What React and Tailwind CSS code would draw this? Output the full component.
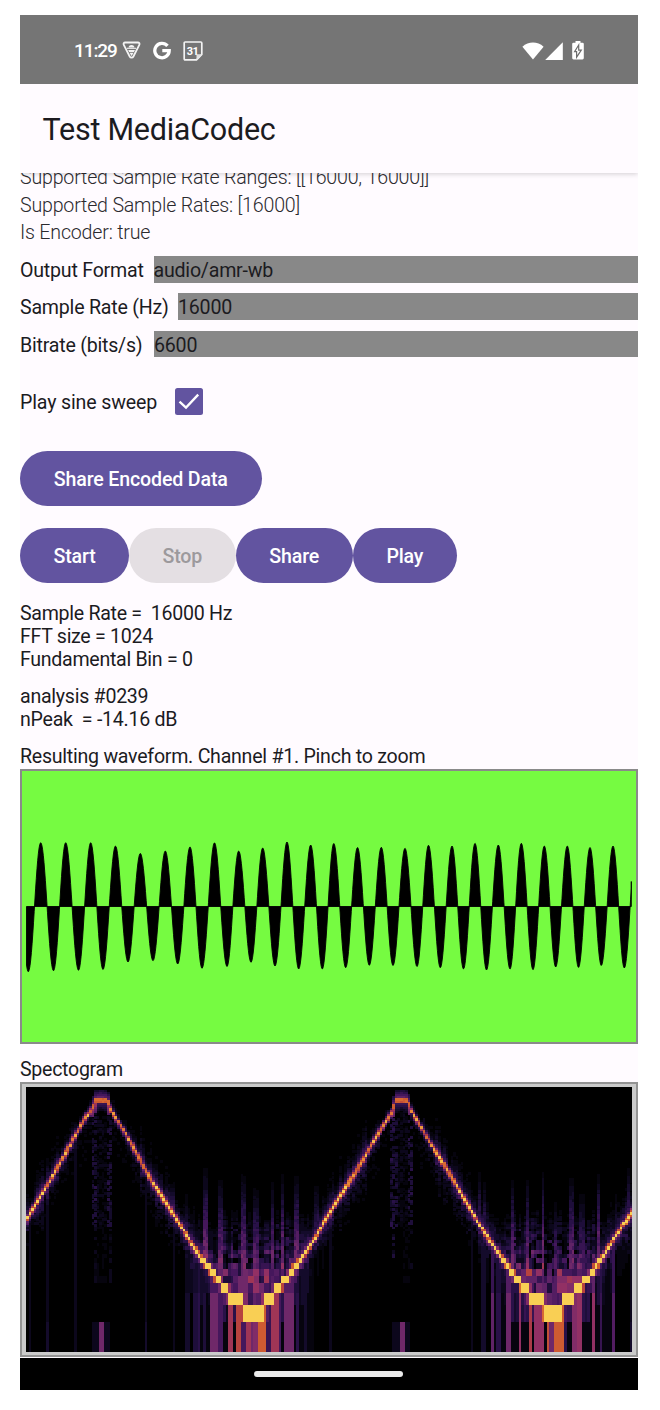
import React from "react";

/* ---------- Status bar icons ---------- */

function ShieldIcon() {
  return (
    <svg width="20" height="19" viewBox="0 0 20 19" fill="none">
      <path d="M3.2 1.5h12.6c1.5 0 2.2 1.2 1.5 2.4l-5.9 11.6c-.8 1.5-2.900 1.500-3.700 0L1.800 3.900C1.100 2.700 1.800 1.500 3.200 1.500Z" stroke="#f3f3f3" strokeWidth="1.800" />
      <path d="M6.600 6.500c0-1.700 1-2.600 2.900-2.600s2.900.9 2.900 2.600Z" fill="#f3f3f3" />
      <path d="M5 7.300h9" stroke="#f3f3f3" strokeWidth="1.100" />
      <path d="M6.200 8.900h6.700l-.9 2H7.100ZM7.500 11.700h4.100L9.600 15Z" fill="#f3f3f3" />
    </svg>
  );
}

function GoogleIcon() {
  return (
    <svg width="18" height="19" viewBox="0 0 18 19" fill="none">
      <path d="M14.500 4.900A7.200 7.200 0 1 0 16.200 9.700H9.300" stroke="#fff" strokeWidth="3.300" />
    </svg>
  );
}

function CalendarIcon() {
  return (
    <svg width="20" height="20" viewBox="0 0 20 20">
      <path d="M2.200 1h15.600q1 0 1 1v11.300l-5.300 5.500H2.200q-1 0-1-1V2q0-1 1-1Z" fill="none" stroke="#f3f3f3" strokeWidth="1.700" />
      <path d="M18.800 13.300h-5.300v5.500Z" fill="#e0e0e0" />
      <text x="9.600" y="13.800" fontSize="11" fontWeight="700" fontFamily="Roboto, sans-serif" textAnchor="middle" letterSpacing="-0.5" fill="#fff">31</text>
    </svg>
  );
}

function WifiIcon() {
  return (
    <svg width="22" height="18" viewBox="0 0 22 18">
      <path d="M.4 4.700C6.500-.9 15.500-.9 21.600 4.700L11 17.600Z" fill="#fff" />
    </svg>
  );
}

function SignalIcon() {
  return (
    <svg width="18" height="18" viewBox="0 0 18 18">
      <path d="M17.800.2V17.900H.2Z" fill="#fff" />
    </svg>
  );
}

function BatteryIcon() {
  return (
    <svg width="12" height="19" viewBox="0 0 12 19">
      <path d="M3.500 0h5v1.800H10.500q1.300 0 1.300 1.300v14q0 1.400-1.300 1.400h-9q-1.300 0-1.300-1.400v-14q0-1.300 1.300-1.300H3.500Z" fill="#fff" />
      <path d="M6.700 4L2.600 10.700h2v5.500l4.700-7.100H6.700Z" fill="#fff" stroke="#6e6e6e" strokeWidth="1.200" />
    </svg>
  );
}

/* ---------- Waveform ---------- */

const TOPS = [
  [40.7, 842.7], [65.7, 842.7], [90.7, 842.7], [115.5, 846], [140.3, 853.5], [165.3, 851], [190, 847],
  [214.5, 842.8], [238.7, 851], [262.7, 848], [287, 842], [310.7, 845], [333.8, 843.5], [357.5, 847.5],
  [381.3, 847.3], [405, 848.3], [428.5, 845.3], [452, 846], [475, 843.3], [498.3, 845], [521.3, 843.3],
  [544.3, 846], [567.3, 846], [590, 847.5], [613, 846], [636, 846],
];
const BOTTOMS = [
  [28.3, 971.7], [53.5, 970.7], [78.5, 970.3], [103, 969.5], [128, 962], [153, 960.7], [177.7, 964],
  [202, 968.3], [227, 966.5], [251, 962.3], [275, 966], [298.7, 969], [322.3, 969], [345.7, 967.7],
  [369.3, 965.3], [393, 965.5], [417, 966.5], [440.3, 967.7], [463.5, 969], [486.5, 970], [510, 969],
  [533, 969.7], [555.7, 967], [578.5, 967.5], [601.3, 965.5], [624.3, 968],
];

function buildWave() {
  const ox = 22;
  const oy = 771;
  const mid = 906.5 - oy;
  const points = [...TOPS, ...BOTTOMS].sort((a, b) => a[0] - b[0]);
  const sample = (x) => {
    let i = points.findIndex((p) => p[0] > x);
    if (i === -1) i = points.length - 1;
    if (i === 0) i = 1;
    const [x0, y0] = points[i - 1];
    const [x1, y1] = points[i];
    const t = ((x - x0) / (x1 - x0)) * Math.PI;
    const c = Math.cos(t);
    const a = c >= 0 ? y0 - 906.5 : -(y1 - 906.5);
    return a * c;
  };
  let d = `M${26.5 - ox} ${mid}`;
  for (let x = 26.5; x <= 631.5; x += 0.7) d += `L${(x - ox).toFixed(1)} ${(mid + sample(x)).toFixed(1)}`;
  return d + `L609.3 ${mid - 25}V${mid}Z`;
}

const WAVE_PATH = buildWave();

/* ---------- Spectrogram ---------- */

const PLOT_W = 606.5;
const PLOT_H = 264.5;
const COLS = 240;
const CELL_W = PLOT_W / COLS;

// Ridge of the sweep, in plot pixels.
const RIDGE = [
  [-1, 135], [10.7, 115], [24, 93.7], [37.3, 70.3], [49, 48.7], [57.3, 33.7], [66, 22], [69, 14],
  [75, 13], [81.5, 14], [86, 25.3], [100.7, 48.7], [117.3, 78.7], [127.3, 97], [147.3, 127],
  [160.7, 148.7], [174, 169.3], [182.3, 180.3], [187.3, 186], [192.3, 193], [199, 201.5], [210, 212],
  [228, 227], [242.5, 212], [251, 201.5], [258.3, 193], [264.7, 186], [269, 180.3], [275.7, 171.3],
  [289, 150.3], [304, 125.3], [320.7, 98.7], [337.3, 72], [354, 43.7], [365.7, 25.3], [369.5, 14],
  [375.7, 13], [381.5, 14], [386, 25.3], [404, 55.3], [420.7, 82], [437.3, 110.3], [454, 138.7],
  [470.7, 163.7], [477.3, 173.7], [482.3, 180.3], [486.7, 186], [492.3, 193], [499.7, 201.5],
  [510.7, 212], [527.3, 227], [541.7, 212], [551.7, 201.5], [559, 193], [565, 186], [568.5, 180.3],
  [577.3, 168.7], [590.7, 147], [607, 124.5],
];

// Vertical low-frequency stripes: [start x, end x, level].
const STRIPES = [
  [2, 5, 0.1], [21, 23, 0.12], [48, 50, 0.09], [119, 122, 0.12], [147, 149, 0.1], [159, 164, 0.13], [168, 171, 0.15],
  [172, 174, 0.2], [177, 180, 0.18], [184, 192, 0.4], [193, 196, 0.3], [199, 200, 0.2], [202, 207, 0.55],
  [211, 214, 0.62], [216, 219, 0.3], [219.5, 224, 0.56], [224, 227, 0.42], [227, 232, 0.46], [232, 240, 0.7],
  [240, 245, 0.25], [245, 252, 0.53], [252, 255, 0.3], [259, 267, 0.42], [271, 273, 0.2], [278, 281, 0.12],
  [303, 305, 0.1], [431, 433, 0.12], [446, 448, 0.09], [454, 459, 0.14], [465, 467, 0.36], [471, 474, 0.2],
  [479, 485, 0.42], [489, 491, 0.3], [492, 496, 0.48], [502, 505, 0.58], [507, 509, 0.35], [509, 517, 0.48],
  [520, 523, 0.66], [523, 527, 0.4], [528, 538, 0.7], [539, 542, 0.2], [545, 550, 0.45], [552, 557, 0.52],
  [560, 562, 0.3], [565, 568, 0.48], [573, 575, 0.25], [580, 581, 0.13], [586, 589, 0.32], [604, 606, 0.12],
];

// Faint spires that rise above the valleys: [x, top y].
const SPIRES = [
  [122, 110], [147, 96], [161, 104], [180, 78], [195, 88], [217, 84], [230, 98], [247, 92], [256, 84], [271, 84],
  [290, 94], [431, 74], [454, 82], [459, 92], [486, 88], [502, 88], [517, 80], [530, 112], [546, 86], [556, 104],
  [572, 82], [590, 104], [603, 76],
];

const RAMP = [
  [0, 0, 0, 0], [0.1, 14, 9, 34], [0.2, 38, 16, 70], [0.3, 72, 24, 94], [0.4, 104, 38, 106],
  [0.5, 146, 48, 100], [0.6, 176, 60, 66], [0.7, 204, 88, 50], [0.8, 226, 122, 52], [0.9, 240, 164, 62], [1, 249, 207, 84],
];

function rampColor(v) {
  let i = 1;
  while (i < RAMP.length - 1 && RAMP[i][0] < v) i++;
  const a = RAMP[i - 1];
  const b = RAMP[i];
  const t = (v - a[0]) / (b[0] - a[0]);
  const mix = (k) => Math.round(a[k] + (b[k] - a[k]) * t);
  return `rgb(${mix(1)},${mix(2)},${mix(3)})`;
}

function hash(a, b) {
  let h = (a * 374761393 + b * 668265263 + 1274126177) | 0;
  h = Math.imul(h ^ (h >>> 13), 1274126177);
  h ^= h >>> 16;
  return (h >>> 0) / 4294967296;
}

function ridgeAt(x) {
  let i = RIDGE.findIndex((p) => p[0] > x);
  if (i < 1) i = RIDGE.length - 1;
  const [x0, y0] = RIDGE[i - 1];
  const [x1, y1] = RIDGE[i];
  return y0 + ((y1 - y0) * (x - x0)) / (x1 - x0);
}

// Frequency bins on a log axis; thin bins are merged into fixed rows.
function buildRows() {
  const rows = [];
  let bottom = PLOT_H;
  for (let k = 1; ; k++) {
    const top = PLOT_H - 42.4 * Math.log(k + 1);
    if (bottom - top < 2.1) break;
    rows.push([top, bottom]);
    bottom = top;
  }
  while (bottom > 0) {
    const top = Math.max(0, bottom - 2);
    rows.push([top, bottom]);
    bottom = top;
  }
  return rows;
}

function buildSpectrogram() {
  const rows = buildRows();
  const levels = 24;
  const paths = Array.from({ length: levels + 1 }, () => "");
  const peaks = [75.5, 375.7];
  const troughs = [228, 527.3];
  for (let c = 0; c < COLS; c++) {
    const x = (c + 0.5) * CELL_W;
    const y = ridgeAt(x);
    const peakDist = Math.min(...peaks.map((p) => Math.abs(x - p)));
    const valleyDist = Math.min(...troughs.map((p) => Math.abs(x - p)));
    const stripe = STRIPES.find((s) => x >= s[0] && x < s[1]);
    const stripeLevel = stripe ? stripe[2] : valleyDist < 60 ? 0.06 : 0;
    const columnNoise = hash(c, 7);
    const valley = Math.max(0, 1 - valleyDist / 78);
    const atPeak = peakDist < 9;
    const spire = SPIRES.find((s) => Math.abs(s[0] - x) < CELL_W * 0.75);
    const haze = 118 + hash(c, 4) * 18;
    rows.forEach(([top, bottom], r) => {
      const mid = (top + bottom) / 2;
      const h = bottom - top;
      const noise = hash(c, r + 50);
      const d = Math.abs(mid - y);
      const below = mid > y;
      const onRidge = y >= top && y < bottom;
      let v = 0;
      if (atPeak) {
        if (d < 2.2) v = 0.68 + noise * 0.08;
        else if (below && d < 11) v = (peakDist > 6 ? 0.6 : 0.33) - d * 0.025;
        else if (!below && d < 10) v = 0.46 - d * 0.035;
      } else {
        const reach = Math.max(0, d - h / 2);
        if (onRidge) v = y > 100 ? 1 : 0.72 + noise * 0.28;
        else if (reach < 1.6) v = (y > 60 ? 0.6 : 0.48) + noise * 0.14;
        else if (reach < 3.5) v = (y > 60 ? 0.34 : 0.22) + noise * 0.14;
        else {
          const spread = (y > 45 ? 4 : 1.5) + columnNoise * (y > 65 ? 9 : 2) + valley * 13;
          v = 0.36 * Math.exp(-(reach - 2) / spread) - 0.03 + (noise - 0.5) * (0.05 + (below ? 0.12 : 0.03));
          if (reach > 22 + columnNoise * 20) v = 0;
        }
      }
      if (valley > 0.02) {
        if (below) {
          v = Math.max(v, stripeLevel * (mid > 205 ? 1 : 0.75));
          if (d < 45) v = Math.max(v, valley * 0.42 * columnNoise);
        } else if (!atPeak) {
          const fine = hash(c >> 1, r * 3 + 11);
          if (mid > haze) {
            const rise = Math.min(1, (mid - haze) / 50);
            v = Math.max(v, rise * (0.1 + 0.16 * columnNoise + 0.44 * (fine - 0.45)));
          }
          if (spire && mid > spire[1]) {
            const rise = Math.min(1, (mid - spire[1]) / 100);
            v = Math.max(v, rise * (0.36 + 0.2 * noise));
          }
        }
        if (mid > 180 && valleyDist < 38 && !onRidge && !below) {
          const block = hash(c >> 1, r + 900);
          v = Math.max(v * 0.7, block < 0.16 ? 0.02 : 0.2 + 0.42 * block * (0.55 + 0.45 * hash(c >> 2, 31)));
        }
      } else {
        if (below && stripeLevel) v = Math.max(v, stripeLevel * 0.75);
        if (spire && !below && mid > spire[1]) v = Math.max(v, Math.min(0.3, (mid - spire[1]) / 90));
      }
      if (mid > 235) v = stripeLevel;
      if (below && peakDist < 11 && d > 11 && mid < 200) {
        const edge = peakDist > 5 ? 0.24 : 0.1;
        v = Math.max(v * 0.4, noise > 0.52 ? edge * (noise - 0.2) * (mid > 140 ? columnNoise : 1) : 0);
      }
      if (r === 0) {
        const signed = Math.min(...peaks.map((p) => (Math.abs(x - p) < 12 ? x - p : 99)));
        if (Math.abs(signed) < 2.7) v = 0.4;
        else if (Math.abs(signed) < 9) v = 0.08;
      }
      if (r === 1 && valleyDist < 9.5) v = 1;
      const q = Math.round(Math.min(1, Math.max(0, v)) * levels);
      if (q > 0) {
        paths[q] += `M${(c * CELL_W).toFixed(2)} ${top.toFixed(2)}h${(CELL_W + 0.1).toFixed(2)}v${(h + 0.1).toFixed(2)}h-${(CELL_W + 0.1).toFixed(2)}z`;
      }
    });
  }
  return paths.map((d, i) => ({ d, color: rampColor(i / levels) })).filter((p) => p.d);
}

const SPECTROGRAM = buildSpectrogram();

/* ---------- Form pieces ---------- */

function Field({ label, value, labelWidth }) {
  return (
    <div className="mb-[10.8px] flex h-[26.5px] items-center tracking-[-0.22px]">
      <span className={`pt-[3px] whitespace-pre ${labelWidth}`}>{label}</span>
      <div className="flex h-full flex-1 items-center bg-[#888888] pt-[3px]">{value}</div>
    </div>
  );
}

function PillButton({ children, width, disabled }) {
  const tone = disabled ? "bg-[#e4dfe3] text-[#9c999c]" : "bg-[#6254a0] text-white";
  return (
    <button
      disabled={disabled}
      className={`flex h-[55px] shrink-0 items-center justify-center rounded-full pt-[4px] text-[19.6px] font-medium tracking-[-0.15px] whitespace-nowrap ${width} ${tone}`}
    >
      {children}
    </button>
  );
}

export default function App() {
  return (
    <div className="h-[1410px] w-[660px] overflow-hidden bg-white pt-[15px] pl-[20px]">
      <div className="flex h-[1375px] w-[617.5px] flex-col overflow-hidden bg-[#fffbff] font-[Roboto,sans-serif] text-[19.6px] text-[#1c1b1f]">
        <header className="relative z-20 flex h-[69px] shrink-0 items-center bg-[#757575] pt-[2px] pr-[53px] pl-[54px] text-white">
          <span className="w-[48px] pt-px text-[19px] font-medium tracking-[-1.1px] whitespace-nowrap">11:29</span>
          <div className="flex items-center">
            <ShieldIcon />
            <div className="ml-[11px]"><GoogleIcon /></div>
            <div className="ml-[11.5px]"><CalendarIcon /></div>
          </div>
          <div className="ml-auto flex items-center">
            <WifiIcon />
            <div className="ml-[1px]"><SignalIcon /></div>
            <div className="mr-[1px] ml-[9px]"><BatteryIcon /></div>
          </div>
        </header>

        <div className="relative z-10 flex h-[88.5px] shrink-0 items-center bg-[#fffbff] pt-[3px] pl-[22.5px] shadow-[0_1px_5px_rgba(0,0,0,0.18)]">
          <h1 className="text-[30.5px] leading-none tracking-[-0.25px] whitespace-nowrap">Test MediaCodec</h1>
        </div>

        <main className="flex h-[1185px] shrink-0 flex-col overflow-hidden">
          <div className="mt-[-8.5px] leading-[27.5px] font-light tracking-[-0.19px] text-[#2b2a2e]">
            <p>Supported Sample Rate Ranges: [[16000, 16000]]</p>
            <p>Supported Sample Rates: [16000]</p>
            <p>Is Encoder: true</p>
          </div>

          <div className="mt-[9.5px]">
            <Field label="Output Format" value="audio/amr-wb" labelWidth="w-[133.5px]" />
            <Field label="Sample Rate (Hz)" value="16000" labelWidth="w-[158px]" />
            <Field label="Bitrate (bits/s)" value="6600" labelWidth="w-[134px]" />
          </div>

          <div className="mt-[19.5px] flex h-[28px] items-center">
            <span className="w-[155px] pt-[3px] tracking-[-0.15px]">Play sine sweep</span>
            <span className="flex h-[27.5px] w-[27.5px] items-center justify-center rounded-[2.5px] bg-[#6254a0]">
              <svg width="22" height="22" viewBox="0 0 22 22" fill="none">
                <path d="M1.500 11.600L8 17.600L20.200 4.600" stroke="#fff" strokeWidth="2.300" />
              </svg>
            </span>
          </div>

          <div className="mt-[35.3px] flex">
            <PillButton width="w-[241.5px]">Share Encoded Data</PillButton>
          </div>

          <div className="mt-[22px] flex">
            <PillButton width="w-[109px]">Start</PillButton>
            <PillButton width="w-[106.7px]" disabled>Stop</PillButton>
            <PillButton width="w-[117px]">Share</PillButton>
            <PillButton width="w-[104.3px]">Play</PillButton>
          </div>

          <div className="mt-[20.5px] leading-[22.7px] tracking-[-0.3px] whitespace-pre">
            <p>Sample Rate =  16000 Hz</p>
            <p>FFT size = 1024</p>
            <p>Fundamental Bin = 0</p>
          </div>
          <div className="mt-[14.5px] leading-[22.7px] tracking-[-0.27px] whitespace-pre">
            <p>analysis #0239</p>
            <p>nPeak  = -14.16 dB</p>
          </div>
          <p className="mt-[14.5px] h-[23.2px] leading-[22.7px] tracking-[-0.26px] whitespace-nowrap">
            Resulting waveform. Channel #1. Pinch to zoom
          </p>

          <div className="h-[275px] shrink-0 border-2 border-[#8a8a8a] bg-[#76fb41]">
            <svg width="613" height="271" viewBox="0 0 613 271">
              <path d={WAVE_PATH} fill="#000" stroke="#000" strokeWidth="0.9" strokeLinejoin="round" />
            </svg>
          </div>

          <p className="mt-[14.7px] h-[23.3px] leading-[22.7px] tracking-[-0.3px]">Spectogram</p>

          <div className="h-[275px] shrink-0 border-2 border-[#939393] bg-[#cacaca] p-[3.5px]">
            <svg className="bg-black" width="606.5" height="264.5" viewBox="0 0 606.5 264.5" preserveAspectRatio="none">
              {SPECTROGRAM.map((p) => (
                <path key={p.color} d={p.d} fill={p.color} shapeRendering="crispEdges" />
              ))}
            </svg>
          </div>
        </main>

        <footer className="flex flex-1 items-center justify-center bg-black">
          <div className="h-[6px] w-[149px] rounded-full bg-[#ebebeb]" />
        </footer>
      </div>
    </div>
  );
}
